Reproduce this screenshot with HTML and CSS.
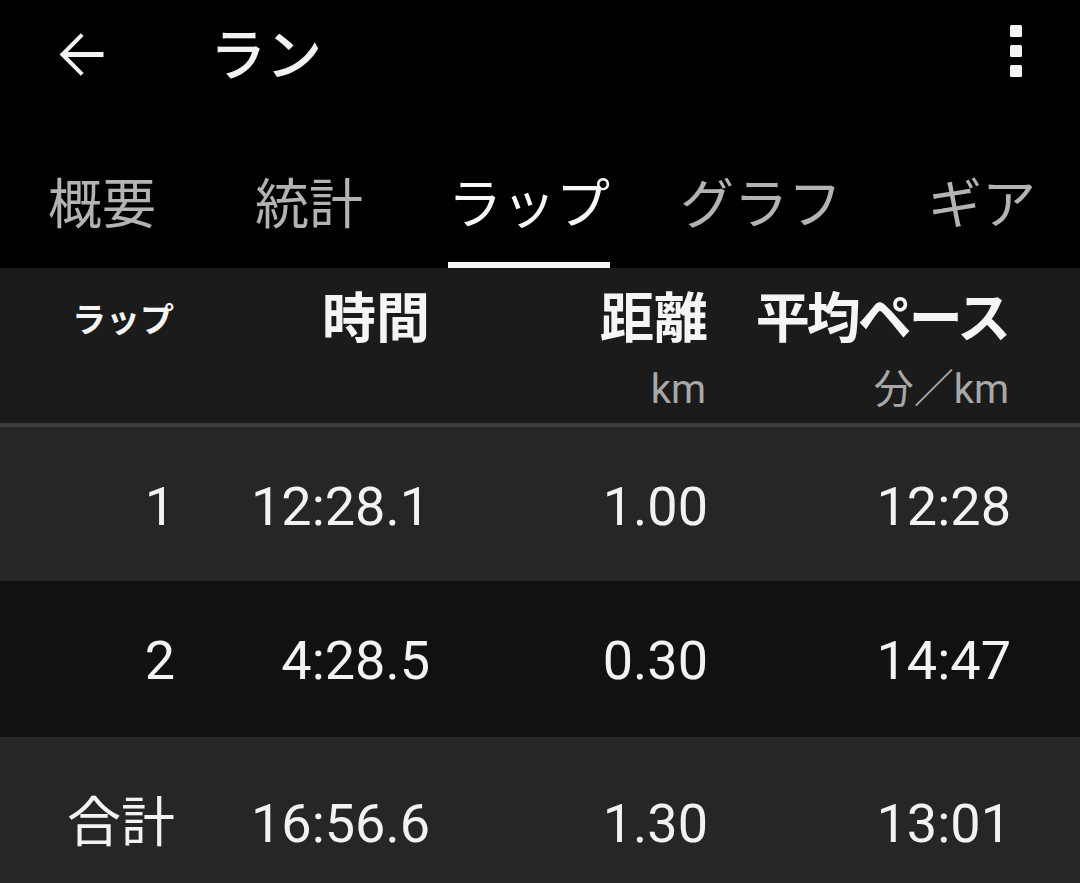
FILE: index.html
```html
<!DOCTYPE html>
<html lang="ja">
<head>
<meta charset="utf-8">
<link rel="stylesheet" href="styles.css">
</head>
<body>
<div class="screen">
  <header class="appbar">
    <svg class="back" viewBox="0 0 24 24" width="69" height="69"><path d="M20 11.1H7.6l5.5-5.5L12.1 4.6 4.7 12l7.4 7.4 1-1-5.5-5.5H20z" fill="#f2f2f2"/></svg>
    <div class="title">ラン</div>
    <svg class="more" viewBox="0 0 14 56" width="14" height="56"><rect x="1" y="1" width="12" height="12" rx="1.5" fill="#f2f2f2"/><rect x="1" y="21" width="12" height="12" rx="1.5" fill="#f2f2f2"/><rect x="1" y="41" width="12" height="12" rx="1.5" fill="#f2f2f2"/></svg>
  </header>
  <nav class="tabs">
    <div class="tab">概要</div>
    <div class="tab">統計</div>
    <div class="tab active">ラップ</div>
    <div class="tab">グラフ</div>
    <div class="tab">ギア</div>
  </nav>
  <div class="table">
    <div class="row head">
      <div class="cell"><span class="h-small">ラップ</span></div>
      <div class="cell"><span class="h-main">時間</span></div>
      <div class="cell"><span class="h-main">距離</span><span class="unit">km</span></div>
      <div class="cell"><span class="h-main pace">平均ペース</span><span class="unit">分／km</span></div>
    </div>
    <div class="divider"></div>
    <div class="row data light first">
      <div class="cell">1</div>
      <div class="cell">12:28.1</div>
      <div class="cell">1.00</div>
      <div class="cell">12:28</div>
    </div>
    <div class="row data dark second">
      <div class="cell">2</div>
      <div class="cell">4:28.5</div>
      <div class="cell">0.30</div>
      <div class="cell">14:47</div>
    </div>
    <div class="row data light total">
      <div class="cell">合計</div>
      <div class="cell">16:56.6</div>
      <div class="cell">1.30</div>
      <div class="cell">13:01</div>
    </div>
  </div>
</div>
</body>
</html>
```
FILE: styles.css
```css
* { box-sizing: border-box; }
html, body { margin: 0; padding: 0; background: #000; }
body {
  font-family: Roboto, "Noto Sans CJK JP", sans-serif;
  color: #f2f2f2;
  width: 1080px;
  height: 883px;
  overflow: hidden;
}
.screen { width: 1080px; height: 883px; display: flex; flex-direction: column; background: #000; }

.appbar {
  height: 108px;
  display: flex;
  align-items: center;
  flex-shrink: 0;
}
.back { margin-left: 46px; flex-shrink: 0; }
.title {
  margin-left: 95px;
  margin-top: 4px;
  font-size: 56px;
  font-weight: 500;
  line-height: 60px;
  color: #f2f2f2;
}
.more { margin-left: auto; margin-right: 57px; margin-top: -4px; }

.tabs {
  height: 160px;
  display: flex;
  align-items: flex-end;
  flex-shrink: 0;
}
.tab {
  font-size: 54px;
  line-height: 60px;
  padding: 0 0 26px;
  border-bottom: 6px solid transparent;
  color: #b3b3b3;
  white-space: nowrap;
}
.tab.active { color: #f7f7f7; border-bottom-color: #f7f7f7; }
.tab:nth-child(1) { margin-left: 48px; }
.tab:nth-child(2) { margin-left: 99px; }
.tab:nth-child(3) { margin-left: 85px; }
.tab:nth-child(4) { margin-left: 70px; }
.tab:nth-child(5) { margin-left: 86px; }

.table { display: flex; flex-direction: column; flex: 1; }
.row {
  display: grid;
  grid-template-columns: 174px 255px 278px 303px;
  flex-shrink: 0;
}
.cell {
  display: flex;
  flex-direction: column;
  align-items: flex-end;
  text-align: right;
  white-space: nowrap;
}
.head {
  height: 155px;
  background: #1b1b1b;
  padding-top: 22px;
}
.h-main {
  font-size: 54px;
  font-weight: 700;
  line-height: 60px;
  color: #f5f5f5;
  margin-right: -1px;
}
.h-main.pace { letter-spacing: -3px; margin-right: 2px; }
.h-small {
  font-size: 34px;
  font-weight: 700;
  line-height: 60px;
  color: #f5f5f5;
}
.unit {
  font-size: 40px;
  line-height: 48px;
  margin-top: 16px;
  color: #a8a8a8;
  margin-right: 1px;
}
.divider { height: 4px; background: #3b3b3b; flex-shrink: 0; }

.data {
  font-size: 54px;
  line-height: 60px;
  color: #f2f2f2;
  align-items: center;
}
.data .cell { margin-right: -1px; }
.data.light { background: #262626; }
.data.dark { background: #111111; }
.data.first { height: 154px; padding-top: 6px; }
.data.second { height: 156px; padding-top: 4px; }
.data.total { flex: 1; align-items: start; padding-top: 57px; }
```
